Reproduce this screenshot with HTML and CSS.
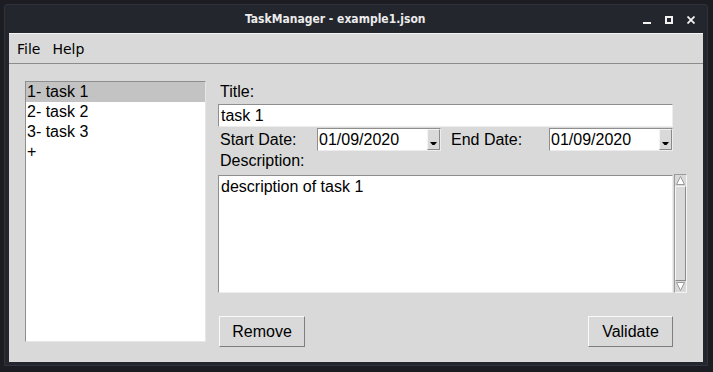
FILE: index.html
```html
<!DOCTYPE html>
<html lang="en">
<head>
    <meta charset="UTF-8">
    <meta name="viewport" content="width=device-width, initial-scale=1.0">
    <title>TaskManager - example1.json</title>
    <link rel="stylesheet" href="styles.css">
</head>
<body>
    <div class="window">
        <div class="titlebar">
            <span class="title">TaskManager - example1.json</span>
            <div class="wm-buttons">
                <svg class="wm-icon" width="8" height="8" viewBox="0 0 8 8"><rect x="0" y="6" width="8" height="2" fill="#f2f2f2"/></svg>
                <svg class="wm-icon" width="8" height="8" viewBox="0 0 8 8"><rect x="1" y="1" width="6" height="6" fill="none" stroke="#f2f2f2" stroke-width="2"/></svg>
                <svg class="wm-icon" width="8" height="8" viewBox="0 0 8 8"><path d="M0.5 0.5 L7.5 7.5 M7.5 0.5 L0.5 7.5" stroke="#f2f2f2" stroke-width="1.8"/></svg>
            </div>
        </div>
        <div class="content">
            <div class="menubar">
                <span class="menu-item">File</span>
                <span class="menu-item">Help</span>
            </div>
            <div class="main">
                <ul class="task-list">
                    <li class="selected">1- task 1</li>
                    <li>2- task 2</li>
                    <li>3- task 3</li>
                    <li class="add">+</li>
                </ul>
                <div class="form">
                    <div class="label">Title:</div>
                    <div class="entry">task 1</div>
                    <div class="date-row">
                        <span class="label start-label">Start Date:</span>
                        <div class="combo">
                            <span class="combo-value">01/09/2020</span>
                            <span class="combo-btn"><svg width="7" height="4" viewBox="0 0 7 4"><polygon points="0,0 7,0 4.5,3 2.5,3" fill="#000"/></svg></span>
                        </div>
                        <span class="label end-label">End Date:</span>
                        <div class="combo">
                            <span class="combo-value">01/09/2020</span>
                            <span class="combo-btn"><svg width="7" height="4" viewBox="0 0 7 4"><polygon points="0,0 7,0 4.5,3 2.5,3" fill="#000"/></svg></span>
                        </div>
                    </div>
                    <div class="label">Description:</div>
                    <div class="desc-wrap">
                        <div class="textarea">description of task 1</div>
                        <div class="scrollbar">
                            <div class="sb-arrow"><svg width="11" height="11" viewBox="0 0 11 11"><polygon points="5.5,1.5 9.5,9.5 1.5,9.5" fill="#fff" stroke="#9a9a9a"/></svg></div>
                            <div class="sb-thumb"></div>
                            <div class="sb-arrow"><svg width="11" height="11" viewBox="0 0 11 11"><polygon points="1.5,1.5 9.5,1.5 5.5,9.5" fill="#fff" stroke="#9a9a9a"/></svg></div>
                        </div>
                    </div>
                    <div class="actions">
                        <button class="btn remove">Remove</button>
                        <button class="btn validate">Validate</button>
                    </div>
                </div>
            </div>
        </div>
    </div>
</body>
</html>
```

FILE: styles.css
```css
body {
    margin: 0;
    padding: 4px 0 0 4px;
    background-color: #1b1d23;
    height: 372px;
    box-sizing: border-box;
    overflow: hidden;
}
.window {
    width: 704px;
    height: 362px;
    box-sizing: border-box;
    border: 1px solid #30333b;
    border-radius: 3px 3px 0 0;
    background-color: #23262d;
    display: flex;
    flex-direction: column;
}
.titlebar {
    height: 28px;
    display: flex;
    align-items: center;
    color: #ececec;
}
.title {
    margin-left: 240px;
    font-family: 'DejaVu Sans', sans-serif;
    font-stretch: condensed;
    font-weight: bold;
    font-size: 12px;
}
.wm-buttons {
    margin-left: auto;
    margin-right: 12px;
    display: flex;
    gap: 14px;
    margin-top: 2px;
}
.wm-icon {
    display: block;
}
.content {
    margin: 0 4px 3px 4px;
    width: 694px;
    height: 329px;
    background-color: #d9d9d9;
    display: flex;
    flex-direction: column;
    font-family: 'Liberation Sans', Arial, sans-serif;
    font-size: 16px;
    color: #000;
}
.menubar {
    height: 31px;
    box-sizing: border-box;
    border-top: 1px solid #f4f4f4;
    border-bottom: 1px solid #8c8c8c;
    display: flex;
    align-items: center;
    padding-left: 2px;
    font-family: 'DejaVu Sans', sans-serif;
    font-size: 14px;
}
.menu-item {
    padding: 0 6px;
}
.main {
    display: flex;
    padding: 17px 16px 0 16px;
}
.task-list {
    list-style: none;
    margin: 0;
    padding: 0;
    width: 181px;
    height: 261px;
    box-sizing: border-box;
    background-color: #fff;
    border: 1px solid;
    border-color: #8e8e8e #e6e6e6 #e6e6e6 #8e8e8e;
}
.task-list li {
    height: 20px;
    line-height: 20px;
    padding-left: 1px;
}
.task-list li.selected {
    background-color: #c3c3c3;
}
.form {
    margin-left: 12px;
    width: 469px;
    padding-top: 1px;
    display: flex;
    flex-direction: column;
}
.label {
    line-height: 20px;
    padding-left: 2px;
}
.entry {
    margin-top: 2px;
    width: 455px;
    height: 23px;
    box-sizing: border-box;
    line-height: 21px;
    padding-left: 2px;
    background-color: #fff;
    border: 1px solid;
    border-color: #8e8e8e #ededed #ededed #8e8e8e;
}
.date-row {
    margin-top: 1px;
    display: flex;
    align-items: center;
    height: 23px;
}
.start-label {
    width: 99px;
    box-sizing: border-box;
}
.end-label {
    width: 108px;
    box-sizing: border-box;
    padding-left: 10px;
}
.combo {
    width: 124px;
    height: 23px;
    box-sizing: border-box;
    display: flex;
    background-color: #fff;
    border: 1px solid;
    border-color: #8e8e8e #ededed #ededed #8e8e8e;
}
.combo-value {
    flex: 1;
    line-height: 21px;
    padding-left: 1px;
}
.combo-btn {
    width: 13px;
    box-sizing: border-box;
    background-color: #d9d9d9;
    border: 1px solid;
    border-color: #f4f4f4 #8a8a8a #8a8a8a #f4f4f4;
    display: flex;
    align-items: flex-end;
    justify-content: center;
    padding-bottom: 3px;
}
.desc-wrap {
    margin-top: 3px;
    display: flex;
    align-items: flex-start;
}
.textarea {
    margin-top: 1px;
    width: 455px;
    height: 118px;
    box-sizing: border-box;
    padding: 1px 2px;
    line-height: 20px;
    background-color: #fff;
    border: 1px solid;
    border-color: #8e8e8e #ededed #ededed #8e8e8e;
}
.scrollbar {
    margin-left: 1px;
    width: 13px;
    height: 119px;
    box-sizing: border-box;
    border: 1px solid;
    border-color: #9a9a9a #f4f4f4 #f4f4f4 #9a9a9a;
    display: flex;
    flex-direction: column;
}
.sb-arrow {
    height: 11px;
}
.sb-arrow svg {
    display: block;
}
.sb-thumb {
    flex: 1;
    border: 1px solid;
    border-color: #f4f4f4 #8a8a8a #8a8a8a #f4f4f4;
}
.actions {
    margin-top: 23px;
    width: 455px;
    display: flex;
    justify-content: space-between;
}
.btn {
    height: 31px;
    box-sizing: border-box;
    padding: 0;
    font-family: 'Liberation Sans', Arial, sans-serif;
    font-size: 16px;
    color: #000;
    background-color: #d9d9d9;
    border: 1px solid;
    border-color: #fafafa #7e7e7e #7e7e7e #fafafa;
    border-radius: 0;
}
.remove {
    width: 86px;
    margin-left: 1px;
}
.validate {
    width: 85px;
}
```
